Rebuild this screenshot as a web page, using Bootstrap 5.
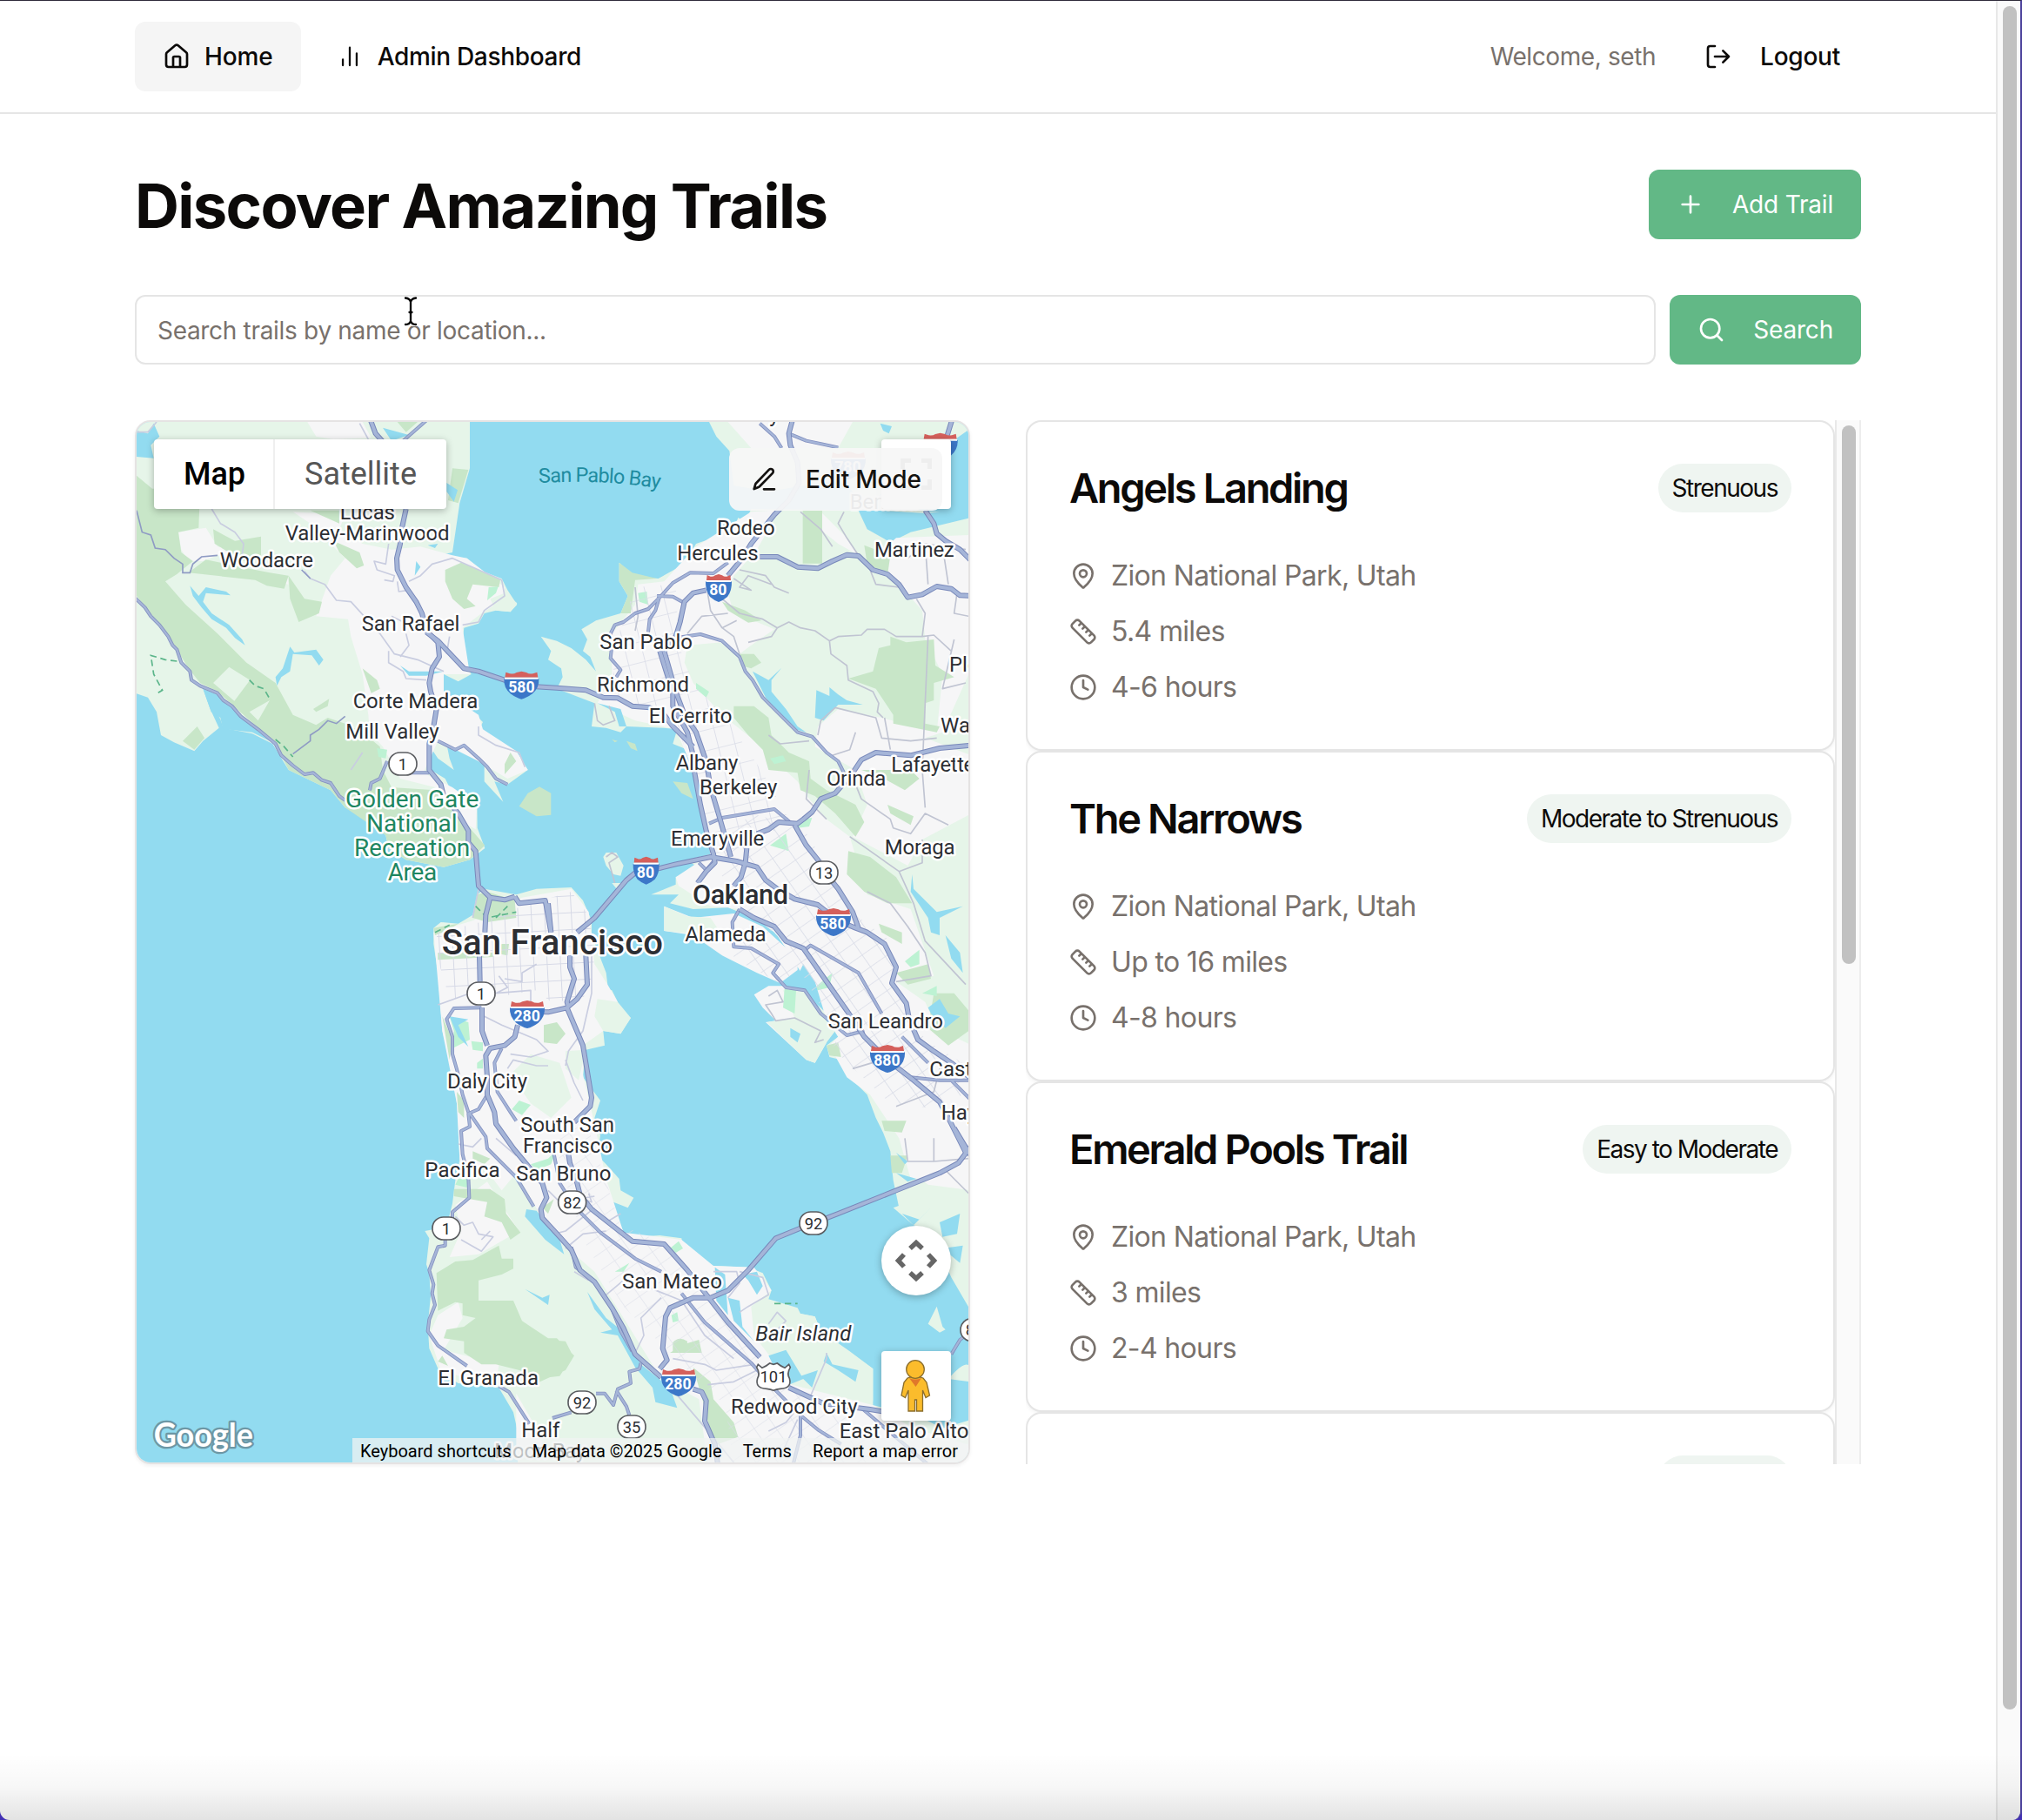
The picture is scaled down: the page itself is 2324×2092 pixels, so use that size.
<!DOCTYPE html>
<html lang="en">
<head>
<meta charset="utf-8">
<title>Discover Amazing Trails</title>
<link href="https://cdn.jsdelivr.net/npm/bootstrap@5.3.0/dist/css/bootstrap.min.css" rel="stylesheet">
<style>
body{font-family:Inter,"Liberation Sans",sans-serif;font-size:28px;line-height:40px;color:#0c0a09;background:#4230b4;height:2092px;overflow:hidden}
.window{height:2092px;border-top:1px solid #2f2b3a;border-right:2px solid #4b419b;border-radius:0 0 11px 11px;background:#fff;overflow:hidden;position:relative}
.window::after{content:"";position:absolute;left:0;right:0;bottom:0;height:76px;background:linear-gradient(rgba(0,0,0,0),rgba(0,0,0,.03) 50%,rgba(0,0,0,.11));pointer-events:none}
.wrap{width:1984px;margin-left:155px}
.topnav{height:130px;border-bottom:2px solid #e5e5e5}
.ico{width:32px;height:32px;fill:none;stroke:currentColor;stroke-width:2;stroke-linecap:round;stroke-linejoin:round;flex:none}
.tbtn{height:80px;border-radius:12px;font-size:28px;line-height:40px;padding:0 32px;display:flex;align-items:center;border:0;white-space:nowrap;color:#0c0a09;font-weight:500}
.tbtn.on{background:#f5f5f5}
.tbtn.go{background:#62b886;color:#fff;font-weight:400;gap:32px;letter-spacing:-.2px}
.headline{font-size:70.5px;line-height:80px;height:80px;font-weight:700;margin:0;letter-spacing:-1.65px;padding-top:2px}
.find{height:80px;border:2px solid #e5e5e5;border-radius:12px;padding:2px 24px 0;font-size:28px;letter-spacing:-.31px;color:#78716c}
.find::placeholder{color:#78716c;opacity:1}
.muted{color:#78716c}
.pane{height:1200px}
.mapbox{width:960px;border:2px solid #e5e3e3;border-radius:18px;overflow:hidden;position:relative;box-shadow:0 2px 4px rgba(0,0,0,.06);font-family:Roboto,sans-serif}
.mapbox>svg.chart{display:block;width:956px;height:1196px}
.ctl{position:absolute;background:#fff;box-shadow:0 2px 8px rgba(0,0,0,.28);border-radius:4px}
.ctl-type{left:20px;top:20px;height:80px;width:336px;font-size:36px;color:#565656}
.ctl-type div{display:flex;align-items:center;justify-content:center;height:80px}
.ctl-type .m{width:139px;color:#000;font-weight:500;border-right:2px solid #efefef;padding-left:2px}
.ctl-type .s{width:197px}
.ctl-full{right:20px;top:20px;width:80px;height:80px}
.ctl-edit{position:absolute;left:681px;top:30px;width:245px;height:72px;border-radius:12px;background:rgba(246,246,246,.94);font-family:Inter,sans-serif;font-weight:500;color:#141210;padding:0 24px;gap:32px;white-space:nowrap;letter-spacing:-.2px}
.ctl-pan{right:20px;top:924px;width:80px;height:80px;border-radius:50%}
.ctl-peg{right:20px;top:1068px;width:80px;height:80px}
.credits{position:absolute;right:0;bottom:0;height:28px;width:708px;background:rgba(240,243,243,.74);font-size:20px;line-height:28px;color:#000;white-space:nowrap;padding:1px 12px 0 9px;justify-content:space-between}
.list{width:960px;overflow:hidden}
.trail{height:380px;border:2px solid #e5e5e5;border-radius:18px;padding:48px;box-shadow:0 2px 4px rgba(0,0,0,.05);background:#fff;flex:none}
.trail h2{font-size:47px;line-height:56px;font-weight:600;letter-spacing:-2.33px;margin:0}
.pill{height:56px;border-radius:28px;background:#eff5f1;padding:0 16px;line-height:56px;letter-spacing:-1.48px;white-space:nowrap}
.facts{font-size:32px;line-height:48px;gap:16px;color:#78716c;margin-top:49px;letter-spacing:-.65px}
.facts>div{display:flex;align-items:center;gap:16px}
.rail{width:30px;background:#fafafa;border-left:2px solid #e8e8e8;border-right:2px solid #ededed;padding:6px 4px 0 6px;flex:none}
.rail i{display:block;width:16px;border-radius:8px;background:#c1c1c1}
.rail.inner i{height:619px}
.rail.outer{width:28px;border-right:0}
.rail.outer i{height:1958px}
.caret{position:absolute;left:462px;top:338px;width:20px;height:36px}
.chart text{font-size:72px;fill:#2c2e33;paint-order:stroke;stroke:#fff;stroke-width:15px;stroke-linejoin:round}
.chart .park{font-size:84px;fill:#1e8661}
.chart .big{font-weight:500;font-size:120px}
.chart .mid{font-weight:500;font-size:92px}
.chart .sh{font-size:53px;font-weight:700;fill:#fff;stroke:none;text-anchor:middle}
.chart .rt{font-size:55px;fill:#2c2e33;stroke:none;text-anchor:middle}
.chart .logo{font-family:Lato,sans-serif;font-weight:700;font-size:112px;fill:#fff;stroke:#6d97a5;stroke-width:14px}
.w{fill:#92dbf0}.g{fill:#e6f5e9}.d{fill:#c8e6c8}.u{fill:#f6f6f7}.mint{fill:#bdf2d3}
</style>
</head>
<body>
<div class="window d-flex">
<div class="flex-grow-1">
  <nav class="topnav"><div class="wrap h-100 d-flex align-items-center justify-content-between">
    <div class="d-flex gap-2">
      <a class="tbtn on gap-3 text-decoration-none"><svg class="ico" viewBox="0 0 24 24"><path d="M15 21v-8a1 1 0 0 0-1-1h-4a1 1 0 0 0-1 1v8M3 10a2 2 0 0 1 .7-1.53l7-6a2 2 0 0 1 2.6 0l7 6A2 2 0 0 1 21 10v9a2 2 0 0 1-2 2H5a2 2 0 0 1-2-2z"/></svg><span style="letter-spacing:-.1px">Home</span></a>
      <a class="tbtn gap-3 text-decoration-none"><svg class="ico" viewBox="0 0 24 24"><path d="M5 21v-6M12 21V3M19 21V9" transform="translate(1.8 1.7) scale(.85)"/></svg><span style="letter-spacing:-.32px">Admin Dashboard</span></a>
    </div>
    <div class="d-flex align-items-center">
      <span class="muted me-2" style="letter-spacing:-.4px">Welcome, seth</span>
      <a class="tbtn text-decoration-none ms-4" style="padding:0 24px;gap:32px"><svg class="ico" viewBox="0 0 24 24"><path d="M9 21H5a2 2 0 0 1-2-2V5a2 2 0 0 1 2-2h4M16 17l5-5-5-5M21 12H9"/></svg><span style="letter-spacing:-.25px">Logout</span></a>
    </div>
  </div></nav>
  <main class="wrap">
    <div class="d-flex justify-content-between" style="margin-top:64px">
      <h1 class="headline">Discover Amazing Trails</h1>
      <button class="tbtn go"><svg class="ico" viewBox="0 0 24 24"><path d="M5 12h14M12 5v14"/></svg><span>Add Trail</span></button>
    </div>
    <div class="d-flex gap-3" style="margin-top:64px">
      <input class="find flex-grow-1" placeholder="Search trails by name or location...">
      <button class="tbtn go"><svg class="ico" viewBox="0 0 24 24"><circle cx="11" cy="11" r="8"/><path d="m21 21-4.3-4.3"/></svg><span>Search</span></button>
    </div>
    <div class="d-flex justify-content-between pane" style="margin-top:64px">
      <section class="mapbox">
<svg class="chart" viewBox="21 30 2868 3588">
<defs>
<pattern id="grid" width="46" height="58" patternUnits="userSpaceOnUse" patternTransform="rotate(-3)"><path d="M0 0H46M0 0V58" fill="none" stroke="#d6d9e6" stroke-width="6"/></pattern>
<pattern id="gridE" width="62" height="50" patternUnits="userSpaceOnUse" patternTransform="rotate(-35)"><path d="M0 0H62M0 0V50" fill="none" stroke="#dadde8" stroke-width="5"/></pattern>
<pattern id="gridN" width="58" height="70" patternUnits="userSpaceOnUse" patternTransform="rotate(-14)"><path d="M0 0H58M0 0V70" fill="none" stroke="#dadde8" stroke-width="5"/></pattern>
<g id="i3"><path d="M-57-27-54-45-40-40Q-26-38-17-44L0-48 17-44Q26-38 40-40L54-45 57-27Z" fill="#d5605c"/><path d="M-60-23H60Q62 8 38 29 18 44 0 48-18 44-38 29-62 8-60-23Z" fill="#3c77c8"/><path d="M-58-27H58V-21H-58Z" fill="#fff"/></g>
<g id="i2"><path d="M-42-27-40-45-28-40Q-20-38-12-44L0-48 12-44Q20-38 28-40L40-45 42-27Z" fill="#d5605c"/><path d="M-45-23H45Q46 10 30 30 15 43 0 48-15 43-30 30-46 10-45-23Z" fill="#3c77c8"/><path d="M-43-27H43V-21H-43Z" fill="#fff"/></g>
<rect id="ca" x="-48" y="-39" width="96" height="78" rx="38" fill="#fff" stroke="#5b5d61" stroke-width="5"/>
<g id="hwy">
 <g>
  <path d="M828 25 845 70 890 120M950 330 935 400 930 450 918 500 920 540 950 600 985 650 1005 690 1020 750 1060 790 1065 840 1040 880 1030 930 1035 960 1055 1020 1045 1080 1030 1140 1030 1230 1070 1280 1080 1320 1130 1380 1165 1440 1165 1480 1190 1510 1200 1630 1240 1670 1290 1678 1325 1667"/>
  <path d="M1020 755 1060 785 1150 880 1200 890 1260 910 1350 940 1470 947 1570 955 1630 980 1680 982 1730 1010 1790 1015 1840 1040 1870 1080 1940 1150"/>
 </g>
 <g transform="translate(1440 0)">
  <path d="M842 25 830 70 835 110 860 170 865 240 830 300 780 350 740 400 700 450 670 500 620 560M545 610 500 620 470 650 455 720 440 770 400 820 440 960 470 1040 510 1100 545 1200 560 1290 590 1390 610 1460 630 1530"/>
  <path d="M385 820 410 900 430 960 430 1010 480 1100 500 1180 505 1240 525 1350 545 1440 570 1520 575 1550 545 1580 515 1620"/>
  <path d="M730 495 790 495 860 530 930 535 980 510 1030 488 1070 492 1120 540 1170 555 1210 590 1240 635 1290 625 1340 597 1390 605 1420 628 1460 630"/>
  <path d="M1050 1240 1080 1195 1130 1170 1250 1180 1350 1155 1460 1145M1392 25 1375 80M1300 335 1330 380 1340 415 1370 440 1420 470 1460 510"/>
 </g>
 <g transform="translate(1440 1230)">
  <path d="M1025 40 990 80 940 100 910 145 880 170 860 185 795 180 760 205 720 220M685 270 680 320 665 370 640 400"/>
  <path d="M100 560 160 510 270 380 300 355 380 340 440 325 560 300 650 315 720 335 750 380 790 410 850 445 930 465 1000 520 1060 545 1100 560 1160 600 1200 680 1185 735 1235 805 1245 860 1275 930 1330 970 1390 1010 1460 1065"/>
  <path d="M850 190 890 260 930 310 960 360 1000 410 1050 490 1070 545"/>
  <path d="M660 480 710 510 780 540 820 590 880 615 960 730 1030 830 1090 920 1170 1000 1260 1070 1350 1145 1380 1200 1440 1320"/>
  <path d="M75 640 75 680 90 720 65 800 70 820M130 640 135 740 100 790 65 820 0 835-80 833M65 820 120 950 150 1130 145 1160 90 1215M0 460 10 560"/>
 </g>
 <g transform="translate(0 1230)">
  <path d="M1335 880 1325 920 1290 950 1240 960 1225 985 1230 1060 1230 1120 1255 1180 1260 1220 1320 1305 1420 1425 1435 1475 1415 1515 1420 1545 1480 1610 1520 1655 1550 1725 1600 1765 1660 1855 1700 1925 1740 2015 1830 2095"/>
  <path d="M1325 437 1340 460 1430 450 1450 560M1240 440 1225 500 1222 560M1203 640 1205 730M1212 820 1212 900 1230 950"/>
 </g>
 <g transform="translate(1440 2445)">
  <path d="M70 110 75 140 100 210 110 250 150 300 290 410 400 420 480 510 550 600 620 690 730 810M830 915 950 970 1110 990 1170 1000"/>
  <path d="M1460 80 1415 140 1350 175 1200 235 1000 315 870 365 785 400 690 510 620 580 560 605 500 605 420 640 405 670 395 780 410 820 385 850M500 920 530 930 545 960 540 1030 575 1110 585 1180M1400 20 1460 120"/>
 </g>
</g>
<g id="art">
 <path d="M1020 25 940 95M15 636 50 670 70 700 100 730 130 770 145 800 160 815 175 860 205 890 210 920 240 940 300 965 320 990 350 1010 380 1045 440 1090 500 1140 520 1180 560 1215 600 1245 630 1240 660 1265 690 1275 720 1320 740 1335"/>
 <path d="M885 1200 860 1260 830 1275 825 1300M960 1240 1030 1240M1060 1130 1120 1160 1150 1145 1200 1190 1230 1220 1260 1260 1300 1280"/>
 <g transform="translate(1440 0)"><path d="M620 515 570 552 490 550 430 585 385 635 345 675 300 690 260 720 230 730 215 760 220 800 215 845 250 885 235 910M385 630 370 680 350 710 345 755M375 630 430 632 470 655M440 775 525 762 600 785 660 840 680 890 705 920 740 980 790 1030 820 1060 860 1100 910 1115 960 1170 1000 1200 1020 1240M830 70 890 95 1000 118M730 35 780 80 805 120"/></g>
 <g transform="translate(1440 1230)"><path d="M555 185 600 165 780 135 840 185M660 480 635 525 640 610 700 615 795 670 775 700 820 750 885 760 940 840 1030 915 1090 900M880 625 905 605 1070 700 1150 840M1220 920 1310 1010M1250 1060 1350 1070 1460 1070M1390 1070 1460 1140M520 320 545 345 575 310"/></g>
 <g transform="translate(0 1230)"><path d="M1210 820 1115 822 1090 860 1110 920 1110 980 1130 1050 1145 1120 1165 1180M1230 1120 1200 1170 1165 1185 1170 1230 1140 1245 1145 1325 1165 1405 1168 1475 1110 1525 1110 1545M1280 960 1255 1010 1265 1110 1310 1180 1330 1210M1170 1185 1225 1265 1230 1305 1330 1405 1390 1505M1085 1620 1085 1640 1060 1645 1030 1725 1045 1775 1040 1805 1050 1845 1030 1895 1025 1935 1060 1985 1160 2055M1270 2125 1305 2145 1375 2255"/></g>
 <g transform="translate(1440 2445)"><path d="M20 110 40 210 90 290 180 380 300 470 390 515M460 590 540 690 700 830 780 920 870 1010 930 1060 1010 1110M320 830 315 850 280 860 285 900 240 920 225 975 195 935 165 935M235 925 270 980 280 1010M15 1020 80 1000M870 1010 870 1080 845 1180M1080 985 1310 1180M1390 800 1420 750 1460 720M80 430 95 500 150 540M215 630 250 720 290 790"/></g>
</g>
</defs>
<rect x="0" y="0" width="2900" height="3700" class="w"/>
<!-- Marin -->
<path class="g" d="M0 0H1170V190L1135 310 1110 480 1060 490 1160 500 1215 545 1280 570 1300 610 1333 660 1310 685 1260 680 1220 690 1200 725 1150 740 1145 780 1155 860 1175 900 1130 925 1080 900 1080 960 1130 1000 1190 1040 1215 1065 1195 1105 1260 1140 1330 1165 1370 1230 1300 1280 1255 1270 1285 1340 1220 1270 1220 1215 1150 1160 1090 1140 1100 1190 1115 1230 1060 1190 1040 1160 1035 1230 1085 1260 1110 1310 1195 1350 1196 1430 1222 1500 1170 1540 1080 1565 950 1540 890 1500 880 1455 800 1385 740 1360 690 1300 545 1230 490 1140 420 1105 320 1085 310 1055 250 950 275 1020 305 1085 250 1130 220 1165 150 1135 105 1110 90 1030 60 980 0 960Z"/>
<path class="u" d="M560 340 740 350 720 400 800 450 900 470 1000 460 1110 490 1160 500 1290 600 1290 640 1210 690 1145 740 1170 900 1080 900 1080 960 1200 1040 1215 1090 1330 1165 1370 1230 1300 1260 1200 1200 1060 1130 1010 1240 1110 1290 1195 1350 1190 1435 1130 1400 1050 1290 930 1260 870 1150 825 1100 820 1040 800 900 760 770 750 710 640 700 690 560 740 500 620 380ZM165 410 260 395 300 460 380 480 300 490 250 510 200 510 175 470ZM610 30H800L830 85 700 90 640 80ZM360 500 430 560 540 560 545 590 480 580 380 540Z"/>
<g class="d"><path d="M21 215 75 260 240 260 235 395 165 410 175 480 215 510 160 555 120 580 190 660 300 760 400 860 500 930 560 1040 640 1075 680 1050 740 1070 800 1100 860 1150 870 1230 900 1290 1050 1300 1110 1370 1170 1430 1222 1490 1170 1540 1080 1565 950 1540 890 1500 880 1455 740 1360 690 1300 545 1230 500 1140 440 1085 300 960 240 930 200 880 160 815 100 730 21 630Z"/><path d="M200 550 260 505 380 530 480 550 545 560 530 605 470 595 430 575ZM285 400 360 440 450 425 450 490 390 510 290 450ZM545 560 600 640 660 650 650 690 580 720 550 640ZM700 440 790 480 805 525 780 535 720 480ZM620 335H720V380ZM1085 540 1140 515 1200 540 1275 575 1270 600 1180 590 1160 640 1190 665 1150 675 1110 640 1085 580ZM1110 190 1165 195 1130 310 1095 300ZM800 880 850 920 860 950 830 965ZM630 1020 685 985 680 1010 640 1030ZM180 1130 230 1080 255 1120 220 1160ZM920 30 990 30 950 65ZM1290 1210 1310 1170 1330 1200 1290 1245Z"/></g>
<path class="g" d="M285 930 340 875 412 920 358 992ZM410 1030 480 990 440 1060ZM1240 640 1290 620 1333 655 1310 685 1260 680Z"/>
<path class="mint" d="M1235 600 1268 598 1260 620 1230 645ZM850 1155 885 1160 880 1190 855 1185Z"/>
<g class="w"><path d="M21 60 60 70 80 35 100 80 70 110 80 155 21 150ZM250 950 310 975 370 1035 440 1090 480 1130 420 1100 318 1088 310 1050 278 1030ZM205 595 235 630 260 600 330 615 345 628 260 620 250 650 280 690 340 730 385 780 395 800 360 775 330 740 280 710 245 670 215 630ZM550 805 565 825 640 815 665 850 650 870 625 835 560 830 550 890 520 910 505 940 500 910 525 880ZM870 50 960 75 900 95ZM1090 240 1128 265 1115 305 1090 270ZM985 510 1000 530 980 560ZM930 870 960 890 1080 890 1020 905 960 905ZM1025 455 1060 450 1050 465Z"/></g>
<path class="d" d="M1340 1355 1370 1310 1410 1288 1450 1310 1450 1385 1400 1390Z"/>
<!-- East bay -->
<g transform="translate(1440 0)">
 <path class="g" d="M540 0 580 80 625 130 640 250 760 270 1000 230 1090 300 1100 380 1180 440 1250 410 1450 340V0ZM1360 120 1460 50V340L1080 330Z"/>
 <path class="w" d="M1070 330 1300 345 1450 330V350L1400 370 1320 400 1250 410 1230 430 1180 445 1110 410 1085 370ZM1450 60V340H1300L1380 150ZM680 35 730 60 765 115 740 110 700 60ZM1145 35 1185 45 1175 70 1155 60Z"/>
 <path class="g" d="M700 330 680 375 655 360 640 400 570 430 510 450 470 520 380 570 300 565 245 515 245 580 275 630 250 690 165 715 115 745 135 780 120 820 145 840 165 890 130 850 80 810 30 785-25 770 10 820 0 850 45 880 50 910 30 950 70 965 160 1000 150 1080 200 1085 250 1100 270 1080 400 1085 445 1090 430 1140 480 1160 500 1230 520 1340 545 1430 560 1520 480 1540 520 1570 440 1600 440 1625 355 1660 450 1660 420 1690 500 1710 620 1705 720 1750 780 1790 860 1880 880 1940 910 2000 940 2060 1000 2150 960 2180 970 2220 1010 2230 1040 2290 1100 2350 1130 2430 1155 2480 1180 2545 1190 2645 1210 2740 1300 2820 1350 2890 1390 2980 1460 3100V360L1250 410 1180 445 1100 400 1070 335Z"/>
 <path class="u" d="M510 460 700 340 780 335 760 400 720 470 640 560 620 620 640 690 720 720 780 745 700 800 660 830 600 790 480 800 470 860 500 930 600 1040 700 1120 760 1180 860 1270 900 1330 960 1400 1040 1460 1100 1660 1250 1710 1330 1940 1200 1960 1300 2030 1340 2120 1460 2180V2680L1300 2640 1250 2640 1210 2500 1110 2350 1030 2290 970 2180 1000 2150 880 1940 790 1800 660 1710 560 1700 450 1630 440 1600 560 1520 520 1340 500 1230 440 1090 300 1060 170 1000 220 900 220 760 300 660 310 590 400 580ZM620 30H1050L1000 120H700ZM940 340 1030 430 1070 490 1000 450 900 370ZM1200 430 1450 420V900L1360 1100 1300 1120 1460 1180V1380L1290 1470 1240 1560 1050 1460 1100 1350 1060 1230 920 1150 930 1080 1000 1020 1150 1050 1340 1100 1360 900 1300 780 1290 680 1210 590 1110 510Z"/>
 <g class="d"><path d="M245 515 290 550 375 570 300 575 285 690 250 690 275 630 245 580ZM878 335H945V518H878ZM1140 810 1180 800 1180 770 1235 790 1330 780 1335 870 1400 910 1330 930 1330 990 1300 1000V1070L1350 1080 1340 1100 1190 1070V1040L1130 950 1035 915 1120 890ZM640 1010 710 1010 760 1050 770 1110 830 1170 900 1200 905 1260 960 1300 1060 1350 1090 1410 1060 1460 990 1380 920 1320 870 1300 860 1240 760 1230 740 1160 690 1110 640 1050ZM660 830 710 830 735 860 700 880 665 870ZM600 650 680 680 735 715 690 722 620 680ZM1090 455 1180 490 1170 560 1100 520ZM1035 1510 1110 1530 1200 1600 1255 1690 1170 1690 1090 1650 1030 1590ZM1170 1350 1260 1390 1250 1420 1180 1380ZM1080 1230 1250 1230 1280 1260 1230 1300 1140 1250ZM1200 1930 1310 1900 1320 1950 1240 1970ZM1140 1760 1220 1790 1220 1830 1150 1790ZM1330 2000 1400 2000 1450 2060V2130L1380 2180 1310 2120ZM1150 2440 1235 2440 1220 2480 1160 2475ZM1180 2560 1240 2560 1220 2620 1185 2620ZM220 1125 240 1130 230 1135ZM270 1130 300 1140 308 1165 285 1155ZM430 1270 480 1275 500 1330 460 1310ZM960 2180 1000 2170 1010 2220 970 2215Z"/></g>
 <path class="mint" d="M310 620 340 615 345 660 315 650ZM510 930 555 960 545 980 510 950ZM765 1190 810 1180 820 1200 780 1210ZM820 1450 830 1510 765 1490ZM870 1400 910 1395 900 1425 860 1430ZM1230 1890 1280 1850 1280 1900 1250 1910ZM920 1980 980 1930 970 1980 930 1990ZM1290 2000 1340 1975 1340 2010Z"/>
 <g class="w"><path d="M705 890 760 920 805 878 770 920 770 960 820 1020 860 1080 890 1100 850 1090 800 1040 750 980ZM925 955 970 975 970 945 1000 970 1030 990 1085 1005 1000 1005 950 1060 920 1050ZM1255 1590 1260 1640 1340 1720 1430 1700 1350 1740 1350 1800 1320 1790 1310 1740 1250 1650ZM1370 1800 1420 1860 1430 1930 1390 1880ZM170 1000 250 1020 270 1080 245 1080 230 1030ZM1310 2050 1350 2020 1380 2070 1420 2080 1370 2120 1320 2070ZM400 1685 500 1715 620 1705 720 1745 780 1790 830 1860 800 1840 720 1770 640 1730 520 1740 400 1700Z"/></g>
 <path class="u" d="M400 1700 500 1740 640 1725 740 1770 860 1880 860 1920 800 1965 720 1930 640 1890 600 1870 500 1800 400 1785ZM710 2005 760 1975 815 1975 890 1990 930 2060 960 2120 960 2170 920 2240 890 2230 750 2100 785 2095 740 2050Z"/>
 <path class="g" d="M400 1700 480 1735 560 1740 600 1800 540 1800 400 1785ZM810 1990 890 1990 930 2060 990 2130 960 2170 920 2240 890 2230 755 2100 850 2085ZM190 1530 200 1515 235 1515 260 1560 250 1595 225 1590 200 1560ZM220 1620 265 1620 240 1645Z"/>
 <path class="mint" d="M815 1985 855 1990 850 2070 810 2050Z"/><path class="w" d="M835 2120 870 2140 860 2170 835 2150ZM880 1900 920 1960 950 2060 900 2010 860 1940Z"/>
 <path fill="url(#gridN)" d="M300 600 440 590 450 800 500 930 620 1060 740 1240 830 1400 700 1500 560 1520 500 1230 430 1040 220 980 230 800Z"/>
 <path fill="url(#gridE)" d="M560 1520 700 1380 880 1430 960 1560 1060 1730 1180 1820 1190 1960 1300 2160 1460 2260V2330L1350 2400 1180 2380 980 2190 1000 2150 880 1940 790 1800 660 1710ZM640 1740 740 1770 860 1880 860 1920 800 1965 640 1880Z"/>
</g>
<!-- Peninsula -->
<path class="g" d="M1195 1660 1220 1640 1330 1660 1400 1640 1520 1635 1560 1680 1590 1750 1590 1800 1640 1930 1645 1970 1590 1975 1660 1990 1680 2030 1655 2040 1725 2085 1690 2140 1630 2130 1635 2180 1570 2195 1560 2290 1620 2370 1600 2430 1620 2490 1610 2560 1640 2590 1685 2640 1690 2680 1735 2705 1715 2740 1665 2720 1640 2755 1680 2775 1700 2825 1740 2840 1825 2835 1900 2845 1905 2885 1960 2925 2010 2940 2130 2945 2180 2965 2210 3025 2200 3055 2300 3085 2310 3105 2360 3115 2380 3165 2480 3235 2560 3295 2560 3415 2760 3430 2900 3400V3700H1330L1340 3535 1320 3445 1270 3360 1130 3345 1065 3305 1030 3225 1025 3145 1035 3045 1030 2965 1020 2935 1030 2845 1015 2820 1090 2805 1110 2725 1120 2645 1135 2575 1130 2445 1125 2380 1110 2270 1075 2130 1060 1930 1045 1830 1045 1775 1070 1755 1130 1760 1180 1730Z"/>
<path class="u" d="M1045 1790 1180 1750 1350 1670 1520 1640 1580 1720 1600 1900 1645 1970 1680 2030 1630 2130 1560 2180 1560 2280 1600 2450 1640 2640 1700 2825 1900 2850 2010 2940 2150 2945 2210 3025 2140 3080 2150 3180 2280 3350 2560 3420 2700 3500 2900 3560V3700H2000L1960 3400 1830 3330 1700 3120 1600 2960 1450 2830 1330 2620 1280 2680 1220 2600 1170 2640 1135 2575 1125 2380 1075 2130ZM1120 2730 1230 2650 1300 2760 1340 2820 1200 2900 1100 2910 1140 2820ZM1060 3110 1130 3065 1145 3120 1080 3230 1270 3280 1260 3360 1070 3300 1030 3180ZM1330 3380 1400 3500 1440 3600H1330Z"/>
<path class="g" d="M1310 2280 1380 2210 1480 2240 1520 2360 1450 2430 1380 2380ZM1610 2020 1680 2030 1725 2085 1690 2140 1630 2130 1600 2080ZM1500 2200 1570 2195 1545 2300 1500 2260ZM2240 3080 2310 3105 2360 3115 2380 3165 2560 3295 2560 3420 2400 3370 2340 3280 2260 3210 2150 3160Z"/>
<g class="d"><path d="M1195 1660 1230 1650 1325 1680 1330 1740 1230 1755 1180 1740ZM1045 1775 1130 1760 1090 1785 1050 1800ZM1060 1860H1250V1875L1060 1885ZM1280 1830 1305 1830 1300 1870 1250 1860ZM1425 2110 1470 2100 1500 2140 1470 2175 1425 2170ZM1075 2080 1110 2160 1100 2230ZM1125 2340 1150 2370 1150 2430 1130 2410ZM1180 2545 1240 2570 1220 2590 1180 2570ZM1115 2675H1240L1290 2710 1295 2760 1345 2825 1310 2850 1280 2790 1220 2770 1230 2720 1115 2700ZM1055 2965 1120 2925 1180 2920 1270 2870 1280 2915 1320 2915V2950L1280 2970 1200 2990V3060H1320L1350 3130 1440 3190 1470 3190 1530 3250 1500 3300 1400 3345 1380 3310 1260 3280 1210 3280 1150 3240 1150 3200 1080 3190 1090 3160 1150 3150 1190 3120 1145 3110V3070L1120 3065 1060 3095ZM1440 3195 1500 3200 1525 3250 1480 3320 1440 3325ZM1060 3270 1075 3250 1095 3285ZM1910 3210 1960 3195 1970 3240 1860 3240ZM1940 3290 2000 3340 2010 3400 2080 3480 2095 3530 2010 3560 1980 3430ZM1460 2710 1440 2760 1420 2740Z"/></g>
<path class="d" d="M1870 3205Q1890 3180 1920 3200 1920 3240 1870 3240Z"/>
<path class="mint" d="M1100 2080 1165 2100 1170 2160 1110 2190 1115 2130ZM1175 2165 1215 2170 1215 2200 1180 2195ZM1195 2240 1215 2225V2260H1195ZM1315 2400 1340 2370 1380 2385 1350 2420ZM1130 2640 1165 2640 1160 2670 1120 2660ZM1860 2880 1890 2855 1905 2880 1880 2895ZM1670 2960 1720 2930 1700 2960ZM1865 3110 1885 3100 1890 3130 1870 3135ZM1380 2590 1440 2570 1470 2540 1450 2590 1400 2610Z"/>
<g class="w"><path d="M1100 2080 1165 2090 1130 2110 1165 2185 1130 2150ZM1365 2745 1400 2750 1480 2850 1495 2900 1430 2850 1360 2770ZM1575 3030 1640 3120 1690 3160 1760 3280 1860 3360 1885 3430 1810 3410 1800 3360 1740 3290 1680 3180 1620 3170 1660 3160 1600 3090ZM1360 3020 1420 3050 1445 3040 1440 3075ZM2015 2945 2050 2970 2060 3110 2020 3060ZM2060 3050 2100 3060 2110 3150 2150 3200 2080 3130ZM2110 2970 2160 2960 2180 3010 2160 3040 2130 2990ZM2200 3250 2260 3230 2290 3280 2320 3330 2270 3350 2220 3290ZM2400 3240 2420 3280 2510 3300 2500 3340 2440 3300 2390 3270ZM2310 3320 2370 3300 2350 3360ZM2570 3330 2900 3330V3470L2800 3500 2740 3470 2560 3420Z"/></g>
<path class="g" d="M2750 3140 2780 3080 2800 3150 2810 3160 2790 3170ZM2630 2740 2740 2700 2890 2710V3000L2860 2960 2820 2850 2700 2800ZM2820 3330Q2890 3250 2900 3300V3340Z"/>
<g class="w"><path d="M2660 2760 2720 2780 2760 2740 2700 2800ZM2790 2790 2860 2760 2850 2830 2800 2840ZM2800 2880 2870 2870 2860 2930ZM2640 2550 2680 2580 2670 2590ZM2640 2620 2710 2640 2680 2650Z"/></g>
<path class="u" d="M2670 2490 2900 2480V2680L2750 2660 2690 2610Z"/>
<path fill="url(#grid)" d="M1055 1790 1190 1760 1350 1700 1520 1650 1585 1740 1600 1930 1560 2020 1450 2030 1400 1990 1280 2010 1100 2020 1065 1900Z"/>
<path fill="url(#gridE)" opacity=".65" d="M1440 2440 1580 2470 1690 2800 1860 2870 2080 3140 2240 3340 2500 3480 2650 3618H2080L2050 3420 1880 3260 1700 3080 1560 2850Z"/>
<!-- local roads -->
<g fill="none" stroke="#c9cde0" stroke-width="5" stroke-linejoin="round">
<path d="M280 330 310 380 360 410 390 450 385 490M21 65H60L90 30M600 545 620 570 670 590 710 645 760 650 860 760 910 830 990 850 1080 890M790 35 820 90M890 450 880 520 840 510 850 540 910 560 905 580 875 575M960 580 1000 560 1040 520 1110 500 1200 540 1280 575 1290 630 1220 680 1200 720 1145 730M890 820 890 860 940 890 950 915 1020 920M950 760 960 800 930 840M1100 770 1090 830M920 580 925 615 960 610M900 700 960 730 1000 730M1200 1080 1200 1110 1260 1145 1340 1170 1360 1220M800 1170 760 1230"/>
<g transform="translate(1440 0)"><path stroke="#c0c4d2" d="M600 640 660 690 740 710 790 740 830 720 870 740 920 750 970 785 1000 770 1080 765 1100 745 1160 745 1200 770 1290 770 1330 765 1390 820M970 785 975 830 1030 870 1035 920 1120 960 1140 1000 1135 1030 1155 1050M790 740 770 770 690 790M870 340 940 400 980 460M1020 340 1000 380 1030 430 1070 490M1110 540 1130 590 1210 600M1270 640 1300 690 1290 770M660 540 750 560 780 600 830 620M640 570 700 610 660 600 690 560 770 590M300 600 310 700 300 750M480 760 530 700 620 690M550 620 560 680 600 740 640 770 660 830M600 740 650 715M930 1110 940 1060 990 1015 1130 1050 1150 1120 1250 1130 1340 1120M1060 1100 1040 1160 980 1180M1400 780 1360 950 1440 930M1160 1050 1180 1160M760 1110 800 1140 900 1130M1240 500 1300 450 1440 470M1300 450 1310 590M1360 460 1380 590M1410 620 1400 690 1450 700M1310 770 1290 1230 1300 1360M900 1230 890 1330 960 1400M1060 1280 1080 1330 1180 1400 1190 1430 1250 1450 1300 1380 1380 1420M1040 1460 1210 1580 1260 1690 1300 1820 1440 1970M1210 1580 1290 1550 1290 1470M1100 1650 1180 1690 1240 1770 1300 1860 1320 1940 1200 1960M760 2010 790 1990 810 2030 750 2040 770 2070 785 2095 850 2085 940 2130 920 2170 950 2160M200 1530 220 1515 240 1530 210 1550 230 1620M160 1000 170 1060 190 1075 230 1060 210 1010M1230 2500 1240 2580H1330L1450 2570M1330 2500V2580M1370 2610 1450 2690M1200 2390 1330 2340 1350 2260M1050 2260 1150 2230"/></g>
<path d="M1200 1640 1180 1740M1270 1940 1300 1980 1260 2000 1380 1990 1380 2030M1400 1900 1350 1930 1350 1960 1290 1950M1220 2080 1280 2110 1400 2160 1440 2200 1380 2220 1310 2210M1300 2260 1320 2230 1400 2250 1440 2250M1500 2250 1510 2200 1560 2130 1590 2000 1590 1860M1500 2230 1530 2310 1560 2370M1060 2040 1170 2000M1130 2520 1180 2530 1210 2500M1260 2500 1330 2560M1120 2770 1150 2800 1180 2790 1200 2830 1250 2840 1210 2890 1140 2850M1210 2850 1240 2820M1440 2680 1480 2720 1600 2700M1460 2830 1500 2820 1600 2740M1500 2880 1560 2830 1640 2820M1640 3040 1700 2990 1750 3000 1900 3060 1980 3180 2080 3260M1830 3050 1760 3120 1770 3180 1740 3240M1870 3260 1980 3280 2020 3300 2150 3280M1880 3380 2000 3520 2080 3618M1990 3350 2080 3340 2160 3300M2200 3510 2260 3480 2310 3420M2240 3600 2300 3470M2340 3400 2400 3260 2400 3240M2100 2960 2180 2980 2200 3040 2130 3080 2100 3100M2060 3050 2100 3000 2090 2960 2010 2960M2200 3140 2230 3100 2260 3130 2230 3160M1530 2960 1580 2990M1690 2760 1640 2790M1560 2710 1590 2720 1580 2690"/>
</g>
<g fill="none" stroke="#5bb58a" stroke-width="5" stroke-dasharray="22 14"><path d="M160 855 120 850 70 835 80 900 110 955 85 970M410 920 430 940 460 950 480 985M500 1125 530 1150 560 1185M1190 1700 1230 1740 1330 1720M1260 1740 1300 1700M1050 1790 1100 1765M2220 3070H2300"/></g>
<use href="#art" fill="none" stroke="#8491c0" stroke-width="12" stroke-linejoin="round"/>
<use href="#art" fill="none" stroke="#a5b5d8" stroke-width="7" stroke-linejoin="round"/>
<g fill="none" stroke="#8f9bc4" stroke-width="5"><path d="M21 335 40 410 70 420 85 465 120 470 150 500 180 520 180 550 205 550 215 520 245 495 300 490M560 1175 620 1130 620 1110 650 1090 680 1060 710 1070 740 1045M590 540 620 570"/></g>
<use href="#hwy" fill="none" stroke="#7888ba" stroke-width="18" stroke-linejoin="round"/>
<use href="#hwy" fill="none" stroke="#a5b5d8" stroke-width="12" stroke-linejoin="round"/>
<!-- shields -->
<use href="#i3" x="1348" y="938"/><text class="sh" x="1348" y="963">580</text>
<use href="#i2" x="2028" y="603"/><text class="sh" x="2026" y="628">80</text>
<use href="#i3" x="1368" y="2073"/><text class="sh" x="1367" y="2098">280</text>
<use href="#i2" x="1778" y="1577"/><text class="sh" x="1776" y="1602">80</text>
<use href="#i3" x="2424" y="1755"/><text class="sh" x="2422" y="1780">580</text>
<use href="#i3" x="2610" y="2226"/><text class="sh" x="2608" y="2251">880</text>
<use href="#i3" x="1890" y="3342"/><text class="sh" x="1888" y="3367">280</text>
<use href="#i3" x="2475" y="180"/><text class="sh" x="2473" y="205">780</text>
<use href="#i3" x="2792" y="116"/>
<use href="#ca" x="939" y="1209"/><text class="rt" x="939" y="1229">1</text>
<use href="#ca" x="1209" y="2001"/><text class="rt" x="1209" y="2021">1</text>
<use href="#ca" x="2391" y="1584"/><text class="rt" x="2391" y="1604">13</text>
<use href="#ca" x="1089" y="2811"/><text class="rt" x="1089" y="2831">1</text>
<use href="#ca" x="1523" y="2721"/><text class="rt" x="1523" y="2741">82</text>
<use href="#ca" x="2355" y="2793"/><text class="rt" x="2355" y="2813">92</text>
<use href="#ca" x="1557" y="3411"/><text class="rt" x="1557" y="3431">92</text>
<use href="#ca" x="1728" y="3495"/><text class="rt" x="1728" y="3515">35</text>
<use href="#ca" x="2910" y="3161"/><text class="rt" x="2910" y="3181">84</text>
<path d="M2164 3280 2178 3292Q2192 3286 2204 3276L2217 3280 2230 3276Q2242 3286 2256 3292L2270 3280 2275 3290Q2262 3312 2272 3328 2282 3362 2240 3364 2226 3366 2217 3370 2208 3366 2194 3364 2152 3362 2162 3328 2172 3312 2159 3290Z" fill="#fff" stroke="#5b5d61" stroke-width="5"/><text class="rt" x="2217" y="3343">101</text>
<!-- place names -->
<text x="722" y="367" textLength="190">Lucas</text><text x="533" y="438" textLength="567">Valley-Marinwood</text><text x="308" y="531" textLength="322">Woodacre</text><text x="797" y="750" textLength="338">San Rafael</text><text x="767" y="1018" textLength="431">Corte Madera</text><text x="742" y="1122" textLength="322">Mill Valley</text>
<path id="bay" d="M1408 240Q1640 228 1830 260" fill="none"/><text style="fill:#1f8ca0;stroke:none;font-size:70px"><textPath href="#bay" textLength="418">San Pablo Bay</textPath></text>
<text x="2203" y="31">y</text>
<g transform="translate(1440 0)"><text x="582" y="420" textLength="200">Rodeo</text><text x="445" y="507" textLength="280">Hercules</text><text x="1125" y="496" textLength="275">Martinez</text><text x="178" y="812" textLength="320">San Pablo</text><text x="168" y="960" textLength="318">Richmond</text><text x="347" y="1069" textLength="287">El Cerrito</text><text x="1383" y="890" textLength="140">Plea</text><text x="1353" y="1101">Waln</text><text x="440" y="1230" textLength="215">Albany</text><text x="1183" y="1236" textLength="288">Lafayette</text><text x="1040" y="330">Benicia</text></g>
<g transform="translate(1440 1230)"><text x="522" y="85" textLength="268">Berkeley</text><text x="960" y="53" textLength="205">Orinda</text><text x="423" y="261" textLength="322">Emeryville</text><text x="1160" y="290" textLength="243">Moraga</text><text class="mid" x="498" y="462" textLength="330">Oakland</text><text x="472" y="592" textLength="280">Alameda</text><text x="965" y="892" textLength="397">San Leandro</text><text x="1315" y="1056">Castr</text><text x="1355" y="1206">Hayw</text></g>
<text class="park" x="741" y="1359" textLength="460">Golden Gate</text><text class="park" x="813" y="1443" textLength="314">National</text><text class="park" x="771" y="1527" textLength="400">Recreation</text><text class="park" x="887" y="1610" textLength="170">Area</text>
<text class="big" x="1073" y="1865" textLength="763">San Francisco</text><text x="1092" y="2328" textLength="276">Daly City</text><text x="1345" y="2478" textLength="323">South San</text><text x="1353" y="2550" textLength="309">Francisco</text><text x="1015" y="2635" textLength="259">Pacifica</text><text x="1330" y="2647" textLength="327">San Bruno</text><text x="1060" y="3352" textLength="347">El Granada</text><text x="1348" y="3532" textLength="132">Half</text><text x="1255" y="3604" textLength="315">Moon Bay</text>
<g transform="translate(1440 2445)"><text x="255" y="574" textLength="345">San Mateo</text><text x="715" y="753" textLength="330" font-style="italic">Bair Island</text><text x="630" y="1005" textLength="437">Redwood City</text><text x="1004" y="1090" textLength="446">East Palo Alto</text></g>
<text class="logo" x="80" y="3564" textLength="343" lengthAdjust="spacingAndGlyphs">Google</text>
</svg>
        <div class="ctl ctl-type d-flex"><div class="m">Map</div><div class="s">Satellite</div></div>
        <div class="ctl ctl-full"><svg width="80" height="80" viewBox="0 0 80 80" fill="none" stroke="#666" stroke-width="5"><path d="M24.500 34V24.500H34M46 24.500H55.500V34M55.500 46V55.500H46M34 55.500H24.500V46"/></svg></div>
        <div class="ctl-edit d-flex align-items-center"><svg class="ico" viewBox="0 0 24 24"><path d="M12 20.500h9M16.400 3.700a2 2 0 0 1 3.100 2.900L8.200 18.200a2 2 0 0 1-.9.500L3.500 20.300 4.700 16.300a2 2 0 0 1 .5-.9z"/></svg><span>Edit Mode</span></div>
        <div class="ctl ctl-pan"><svg width="80" height="80" viewBox="0 0 80 80" fill="none" stroke="#666" stroke-width="5.500"><path d="M33 26 40 19.500 47 26M33 54 40 60.500 47 54M26 33 19.500 40 26 47M54 33 60.500 40 54 47"/></svg></div>
        <div class="ctl ctl-peg"><svg width="80" height="80" viewBox="0 0 80 80" stroke="#8a6d2c" stroke-width="1.300"><path d="M30 31Q39 27 48 31L52 36 55.500 51 51 53.500 47.500 45V69H40.500V56H38.500V69H31L31 45 27.500 53.500 23 51 26 36Z" fill="#fbbc2c"/><path d="M32 31Q39 34 46 31L39.500 41Z" fill="#e0782a" stroke="none"/><circle cx="39" cy="21" r="10.300" fill="#fbbc2c"/></svg></div>
        <div class="credits d-flex"><span>Keyboard shortcuts</span><span>Map data ©2025 Google</span><span>Terms</span><span>Report a map error</span></div>
      </section>
      <section class="list d-flex">
        <div class="flex-grow-1 d-flex flex-column" id="trails"></div>
        <div class="rail inner"><i></i></div>
      </section>
    </div>
  </main>
</div>
<div class="rail outer"><i></i></div>
<svg class="caret" viewBox="0 0 20 36" fill="none" stroke-linecap="round"><path d="M4 4Q9 4 10 8 11 4 16 4M10 8V30M4 34Q9 34 10 30 11 34 16 34M8 20H12" stroke="#fff" stroke-width="5"/><path d="M4 3.500Q9 4 10 8 11 4 16 3.500M10 8V30M4 34Q9 34 10 30 11 34 16 34M8.500 20H11.500" stroke="#000" stroke-width="2.300"/></svg>
</div>
<script src="https://cdn.jsdelivr.net/npm/bootstrap@5.3.0/dist/js/bootstrap.bundle.min.js"></script>
<script>
const icon = p => `<svg class="ico" viewBox="0 0 24 24">${p}</svg>`;
const pin = icon('<path d="M20 10c0 5-5.500 10.200-7.400 11.800a1 1 0 0 1-1.200 0C9.500 20.200 4 15 4 10a8 8 0 0 1 16 0"/><circle cx="12" cy="10" r="3"/>');
const ruler = icon('<path d="M21.300 15.300a2.400 2.400 0 0 1 0 3.400l-2.600 2.600a2.400 2.400 0 0 1-3.400 0L2.700 8.700a2.410 2.410 0 0 1 0-3.400l2.600-2.600a2.410 2.410 0 0 1 3.400 0ZM14.500 12.500l2-2M11.500 9.500l2-2M8.500 6.500l2-2M17.500 15.500l2-2"/>');
const clock = icon('<circle cx="12" cy="12" r="10"/><path d="M12 6v6l4 2"/>');
const trails = [
  ["Angels Landing", "Strenuous", "5.4 miles", "4-6 hours"],
  ["The Narrows", "Moderate to Strenuous", "Up to 16 miles", "4-8 hours"],
  ["Emerald Pools Trail", "Easy to Moderate", "3 miles", "2-4 hours"]
];
document.getElementById("trails").innerHTML = trails.map(([name, level, dist, time]) => `
  <article class="trail">
    <div class="d-flex justify-content-between"><h2>${name}</h2><span class="pill">${level}</span></div>
    <div class="facts d-flex flex-column"><div>${pin}<span>Zion National Park, Utah</span></div><div>${ruler}<span>${dist}</span></div><div>${clock}<span>${time}</span></div></div>
  </article>`).join("") + '<article class="trail d-flex justify-content-end"><span class="pill" style="width:153px"></span></article>';
</script>
</body>
</html>
